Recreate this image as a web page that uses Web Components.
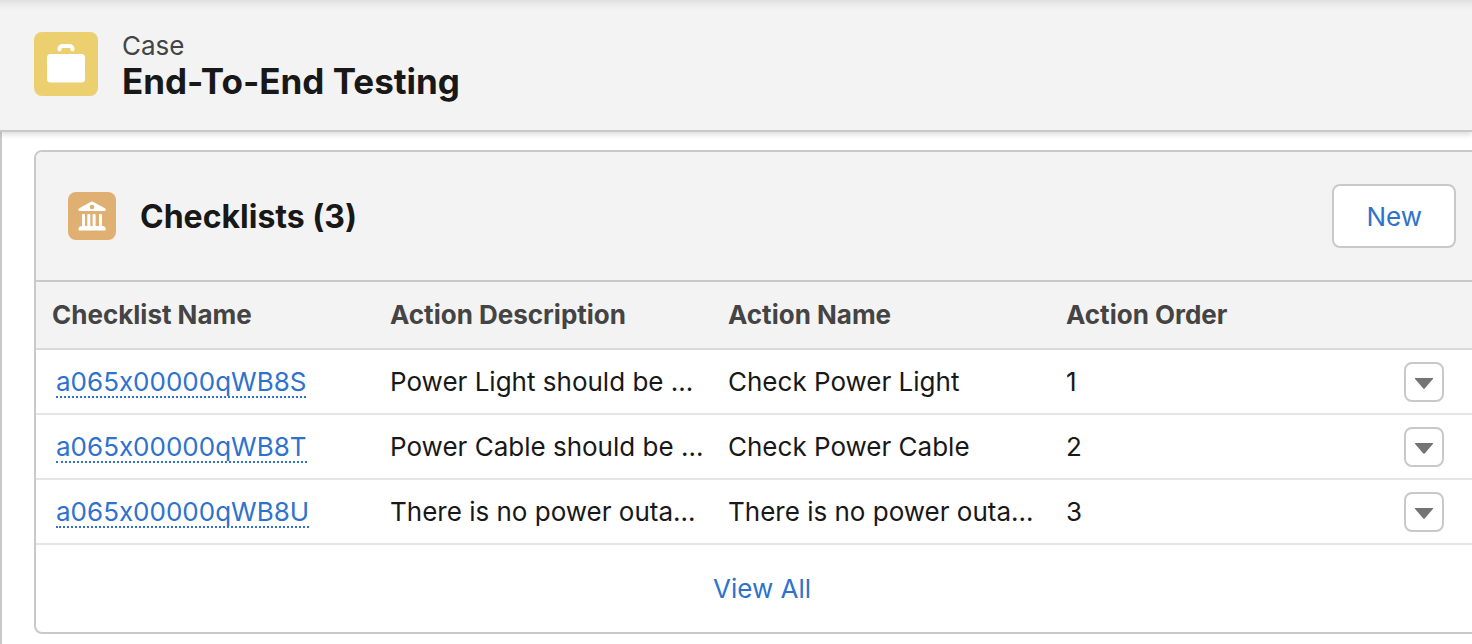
<!DOCTYPE html>
<html lang="en">
<head>
<meta charset="utf-8">
<meta name="viewport" content="width=device-width, initial-scale=1">
<title>End-To-End Testing | Case</title>
<style>
  :root {
    --line: #c9c9c9;
    --panel: #f3f3f3;
    --text: #181818;
    --muted: #444444;
    --link: #2e72cd;
  }
  body {
    margin: 0;
    overflow-x: hidden;
    background: #fff;
    color: var(--text);
    font: 26px/32px Inter, "Liberation Sans", sans-serif;
    /* keeps the x in record names a letter, not a multiplication sign */
    font-feature-settings: "calt" 0;
  }
</style>
</head>
<body>
<case-page></case-page>

<template id="case-page">
  <style>
    :host { display: flex; flex-direction: column; min-height: 100vh; }
    main { flex: 1; border-left: 2px solid var(--line); padding: 18px 0 10px 32px; }
    /* the card runs on past the right edge of the viewport */
    related-list { margin-right: -18px; }
  </style>
  <record-header>
    <case-icon slot="icon"></case-icon>
    <span slot="type">Case</span>
    <span slot="title">End-To-End Testing</span>
  </record-header>
  <main>
    <related-list>
      <bank-icon slot="icon"></bank-icon>
      <span slot="title">Checklists (3)</span>
      <action-button slot="actions">New</action-button>
      <checklist-table></checklist-table>
      <text-link slot="footer">View All</text-link>
    </related-list>
  </main>
</template>

<template id="record-header">
  <style>
    :host {
      display: block; position: relative; background: var(--panel);
      border-bottom: 2px solid var(--line);
      box-shadow: 0 2px 6px rgba(0,0,0,.16), inset 0 12px 12px -12px rgba(0,0,0,.16);
    }
    header { display: flex; gap: 24px; padding: 32px 34px 28px; }
    div { display: flex; flex-direction: column; }
    p { margin: 0; line-height: 28px; color: var(--muted); }
    h1 { margin: 0; font-size: 35px; font-weight: 700; line-height: 42px; }
  </style>
  <header>
    <slot name="icon"></slot>
    <div>
      <p><slot name="type"></slot></p>
      <h1><slot name="title"></slot></h1>
    </div>
  </header>
</template>

<template id="case-icon">
  <style>
    :host { display: block; width: 64px; height: 64px; border-radius: 8px; background: #ecd06f; }
    svg { display: block; }
  </style>
  <svg width="64" height="64" viewBox="0 0 64 64" aria-hidden="true">
    <path d="M25.500 17.500V17a3 3 0 0 1 3-3h7a3 3 0 0 1 3 3v.5" fill="none" stroke="#fff" stroke-width="4" stroke-linecap="round"/>
    <rect x="13" y="22" width="38" height="28.500" rx="3.500" fill="#fff"/>
  </svg>
</template>

<template id="bank-icon">
  <style>
    :host { display: block; width: 48px; height: 48px; border-radius: 8px; background: #e0b073; }
    svg { display: block; }
  </style>
  <svg width="48" height="48" viewBox="0 0 48 48" aria-hidden="true" fill="#fff">
    <path fill-rule="evenodd" d="M23.200 9.700a2 2 0 0 1 1.600 0L37 16.200c.5.300.7.700.7 1.200v.6c0 .6-.4 1-1 1H11.500c-.6 0-1-.4-1-1v-.6c0-.5.200-.9.700-1.200zM24 12.700a2.300 2.300 0 1 0 0 4.600 2.300 2.300 0 0 0 0-4.600z"/>
    <path d="M14 23q0-1 1-1h1q1 0 1 1v11h2.300V23q0-1 1-1h1q1 0 1 1v11h2.300V23q0-1 1-1h1q1 0 1 1v11H31V23q0-1 1-1h1q1 0 1 1v11q3.700.200 3.700 3v.5q0 1-1 1H11.500q-1 0-1-1V37q0-2.800 3.500-3z"/>
  </svg>
</template>

<template id="related-list">
  <style>
    :host { display: block; border: 2px solid var(--line); border-radius: 8px; overflow: hidden; background: #fff; }
    header {
      display: flex; align-items: center; gap: 24px; padding: 32px;
      background: var(--panel); border-bottom: 2px solid var(--line);
    }
    h2 { flex: 1; margin: 0; padding-top: 2px; font-size: 32px; font-weight: 700; line-height: 40px; }
    footer { padding: 28px 0 27px; text-align: center; }
  </style>
  <header>
    <slot name="icon"></slot>
    <h2><slot name="title"></slot></h2>
    <slot name="actions"></slot>
  </header>
  <slot></slot>
  <footer><slot name="footer"></slot></footer>
</template>

<template id="action-button">
  <style>
    :host { display: block; }
    button {
      display: block; height: 64px; padding: 2px 32px 0; background: #fff; color: var(--link);
      border: 2px solid var(--line); border-radius: 8px; font: inherit; cursor: pointer;
    }
  </style>
  <button type="button"><slot></slot></button>
</template>

<template id="text-link">
  <style>
    :host { display: inline; }
    a { color: var(--link); text-decoration: none; }
  </style>
  <a href="#all"><slot></slot></a>
</template>

<template id="menu-button">
  <style>
    :host { display: block; }
    button {
      display: flex; align-items: center; justify-content: center;
      width: 40px; height: 40px; padding: 0; background: #fff;
      border: 2px solid var(--line); border-radius: 8px; cursor: pointer;
    }
    svg { display: block; }
  </style>
  <button type="button" aria-label="Show actions">
    <svg width="20" height="16" viewBox="0 0 20 16" aria-hidden="true">
      <path d="M1.200 4h17.600q.6.300.1.900l-8.200 9.500q-.7.700-1.400 0L1.100 4.900q-.5-.6.100-.9z" fill="#747474"/>
    </svg>
  </button>
</template>

<template id="checklist-table">
  <style>
    :host { display: block; }
    table { width: 100%; table-layout: fixed; border-collapse: separate; border-spacing: 0; }
    th, td { padding: 0 8px 0 16px; text-align: left; white-space: nowrap; overflow: hidden; text-overflow: ellipsis; }
    th { height: 66px; background: var(--panel); color: var(--muted); font-weight: 700; border-bottom: 2px solid #dadada; }
    td { height: 63px; border-bottom: 2px solid #e5e5e5; }
    .menu { width: 76px; }
    a {
      display: inline-block; margin-left: 4px; padding-top: 2px; line-height: 28px;
      color: var(--link); text-decoration: none; border-bottom: 2px dotted var(--link);
    }
  </style>
  <table>
    <thead>
      <tr>
        <th scope="col">Checklist Name</th>
        <th scope="col">Action Description</th>
        <th scope="col">Action Name</th>
        <th scope="col">Action Order</th>
        <th class="menu" scope="col" aria-label="Actions"></th>
      </tr>
    </thead>
    <tbody></tbody>
  </table>
</template>

<script>
  class TemplateElement extends HTMLElement {
    constructor() {
      super();
      const template = document.getElementById(this.localName);
      this.attachShadow({ mode: "open" }).append(template.content.cloneNode(true));
    }
  }

  const checklists = [
    ["a065x00000qWB8S", "Power Light should be ...", "Check Power Light", "1"],
    ["a065x00000qWB8T", "Power Cable should be ...", "Check Power Cable", "2"],
    ["a065x00000qWB8U", "There is no power outa...", "There is no power outa...", "3"]
  ];

  class ChecklistTable extends TemplateElement {
    constructor() {
      super();
      const body = this.shadowRoot.querySelector("tbody");
      for (const [name, ...values] of checklists) {
        const row = body.insertRow();
        const link = document.createElement("a");
        link.href = "#" + name;
        link.textContent = name;
        row.insertCell().append(link);
        for (const value of values) row.insertCell().textContent = value;
        const menu = row.insertCell();
        menu.className = "menu";
        menu.append(document.createElement("menu-button"));
      }
    }
  }

  for (const name of ["case-icon", "bank-icon", "action-button", "text-link", "menu-button", "record-header", "related-list"]) {
    customElements.define(name, class extends TemplateElement {});
  }
  customElements.define("checklist-table", ChecklistTable);
  customElements.define("case-page", class extends TemplateElement {});
</script>
</body>
</html>
